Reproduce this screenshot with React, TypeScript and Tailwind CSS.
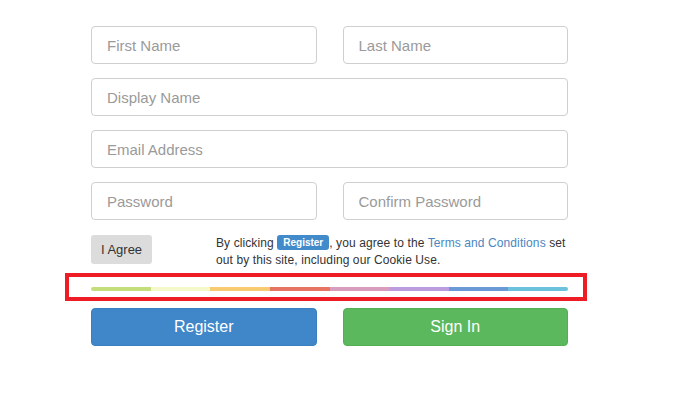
import React from "react";

const segs = ["#c4de7c", "#f5f8c8", "#f8ca72", "#e67463", "#d89cbd", "#bb9ddf", "#6a9ad5", "#6cc2dc"];

function Field({ ph }: { ph: string }) {
  return (
    <input
      readOnly
      placeholder={ph}
      className="h-[38px] w-full rounded-[4px] border border-[#cfcfcf] bg-white px-[15px] text-[15px] text-[#555] outline-none placeholder:text-[#9a9a9a]"
    />
  );
}

export default function App() {
  return (
    <div className="min-h-[404px] w-[695px] bg-white font-['Liberation_Sans',Arial,sans-serif]">
      <div className="ml-[91px] w-[477px] pt-[26px]">
        <div className="flex flex-col gap-[14px]">
          <div className="grid grid-cols-2 gap-[26px]">
            <Field ph="First Name" />
            <Field ph="Last Name" />
          </div>
          <Field ph="Display Name" />
          <Field ph="Email Address" />
          <div className="grid grid-cols-2 gap-[26px]">
            <Field ph="Password" />
            <Field ph="Confirm Password" />
          </div>
        </div>

        <div className="mt-[15px] flex">
          <div className="w-[125px] shrink-0">
            <div className="flex h-[29px] w-[61px] items-center justify-center rounded-[3px] bg-[#dcdcdc] text-[13px] text-[#333]">
              I Agree
            </div>
          </div>
          <div className="w-[356px] shrink-0 text-[12px] leading-[17px] tracking-[0.1px] text-[#333]">
            By clicking{" "}
            <span className="inline-block rounded-[3px] bg-[#428bca] px-[6px] align-top text-[10px] font-bold leading-[15px] tracking-normal text-white">
              Register
            </span>
            , you agree to the <span className="text-[#4a86c0]">Terms and Conditions</span> set out by this site, including our Cookie Use.
          </div>
        </div>

        <div className="relative mt-[18px]">
          <div className="flex h-[4px] w-full overflow-hidden rounded-full">
            {segs.map((c, i) => (
              <div key={i} className="flex-1" style={{ backgroundColor: c }} />
            ))}
          </div>
          <div className="pointer-events-none absolute left-[-26px] top-[-14px] h-[28px] w-[522px] border-[4px] border-[#ee1c25]" />
        </div>

        <div className="mt-[17px] grid grid-cols-2 gap-[26px]">
          <div className="flex h-[38px] items-center justify-center rounded-[4px] border border-[#3a7fbf] bg-[#3f87c9] text-[16px] text-white">
            Register
          </div>
          <div className="flex h-[38px] items-center justify-center rounded-[4px] border border-[#52b052] bg-[#5cb85c] text-[16px] text-white">
            Sign In
          </div>
        </div>
      </div>
    </div>
  );
}
